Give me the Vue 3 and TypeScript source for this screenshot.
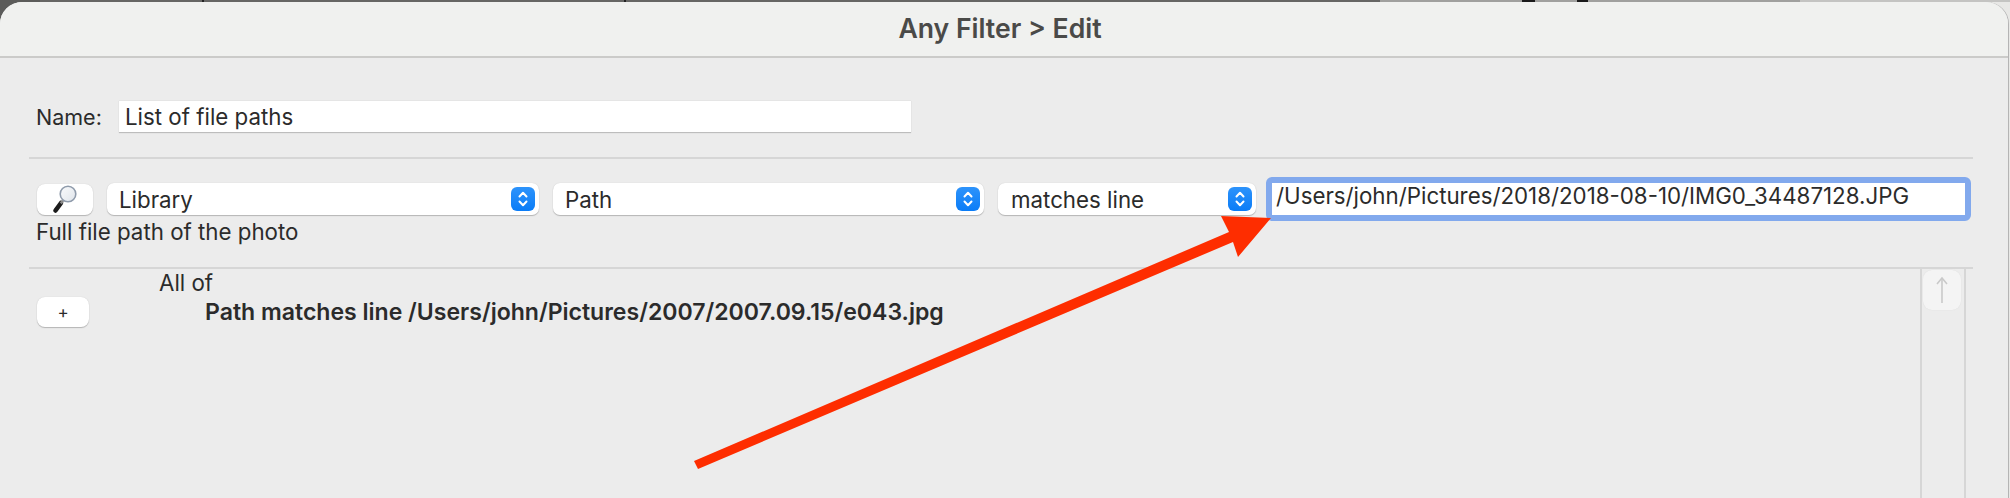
<script setup lang="ts">
interface Popup {
  label: string;
  cls: string;
}

const popups: Popup[] = [
  { label: 'Library', cls: 'w-library' },
  { label: 'Path', cls: 'w-path' },
  { label: 'matches line', cls: 'w-match' },
];
</script>

<template>
  <div class="screen">
    <div class="window">
      <header class="titlebar">Any Filter &gt; Edit</header>

      <section class="name-row">
        <label class="name-label">Name:</label>
        <div class="name-field">List of file paths</div>
      </section>

      <hr class="rule rule-top" />

      <section class="criteria">
        <div class="criteria-row">
          <button class="tool-btn search-btn">
            <svg width="30" height="30" viewBox="0 0 30 30">
              <defs>
                <linearGradient id="glass" x1="0" y1="0" x2="1" y2="1">
                  <stop offset="0" stop-color="#fafbfc" />
                  <stop offset="1" stop-color="#dfe4ea" />
                </linearGradient>
              </defs>
              <path d="M11 19 L5.5 26.5" stroke="#1c1c1c" stroke-width="4.6" stroke-linecap="round" />
              <path d="M13 16.5 L10.8 19.4" stroke="#8a8a8a" stroke-width="2.6" />
              <circle cx="18" cy="10" r="7.8" fill="url(#glass)" stroke="#8f9bab" stroke-width="1.6" />
            </svg>
          </button>
          <div v-for="p in popups" :key="p.label" class="popup" :class="p.cls">
            <span class="popup-label">{{ p.label }}</span>
            <span class="stepper">
              <svg width="12" height="18" viewBox="0 0 12 18" fill="none" stroke="#fff" stroke-width="2" stroke-linecap="round" stroke-linejoin="round">
                <path d="M2.5 6.5 L6 2.8 L9.5 6.5" />
                <path d="M2.5 11.5 L6 15.2 L9.5 11.5" />
              </svg>
            </span>
          </div>
          <div class="value-field">/Users/john/Pictures/2018/2018-08-10/IMG0_34487128.JPG</div>
        </div>
        <p class="hint">Full file path of the photo</p>
      </section>

      <hr class="rule rule-bottom" />

      <section class="results">
        <div class="add-col">
          <button class="tool-btn add-btn">+</button>
        </div>
        <div class="tree">
          <div class="tree-head">All of</div>
          <div class="tree-item">Path matches line /Users/john/Pictures/2007/2007.09.15/e043.jpg</div>
        </div>
        <div class="scroll-col">
          <button class="up-btn">
            <svg width="14" height="28" viewBox="0 0 14 28" fill="none" stroke="#c9c9c9" stroke-width="1.6">
              <path d="M7 27 V2" />
              <path d="M2 8 L7 2 L12 8" />
            </svg>
          </button>
        </div>
      </section>
    </div>

    <svg class="annotation" width="2010" height="498" viewBox="0 0 2010 498">
      <path d="M694 461 L1229 232 L1221 216 L1271 218 L1238 257 L1233 242 L698 469 Z" fill="#fe2d00" />
    </svg>
  </div>
</template>

<style>
html,
body {
  margin: 0;
  background: #e4e4e4;
}
</style>

<style scoped>
.screen {
  position: relative;
  width: 2010px;
  height: 498px;
  overflow: hidden;
  background:
    linear-gradient(#5c5c5a, #5c5c5a) 0 0 / 40px 24px no-repeat,
    linear-gradient(
        to right,
        #666664 0 202px,
        #222 202px 204px,
        #666664 204px 624px,
        #222 624px 626px,
        #666664 626px 1380px,
        #a0a09e 1380px 1522px,
        #1a1a1a 1522px 1535px,
        #a0a09e 1535px 1577px,
        #1a1a1a 1577px 1588px,
        #a0a09e 1588px 1800px,
        #c4c4c2 1800px
      )
      0 0 / 100% 2px no-repeat,
    #e8e8e6;
  font-family: Inter, 'Liberation Sans', sans-serif;
  color: #2b2b2b;
}

.window {
  width: 2008px;
  height: 496px;
  margin-top: 2px;
  border-radius: 22px 22px 0 0;
  overflow: hidden;
  background: #ececec;
  box-shadow: 1px 0 0 #b4b4b4;
}

.titlebar {
  height: 54px;
  padding-right: 8px;
  background: #f0f1ef;
  border-bottom: 2px solid #cbcbc9;
  text-align: center;
  line-height: 52px;
  font-size: 26.6px;
  font-weight: 600;
  color: #4a4a48;
}

.name-row {
  display: flex;
  align-items: center;
  margin-top: 43px;
  padding-left: 36px;
  height: 32px;
}

.name-label {
  width: 83px;
  font-size: 21.5px;
}

.name-field {
  width: 792px;
  height: 32px;
  line-height: 30px;
  padding: 1px 0 0 6px;
  box-sizing: border-box;
  background: #fff;
  border-bottom: 1px solid #bdbdbd;
  box-shadow: 0 0 1px #c4c4c4;
  font-size: 22.3px;
}

.rule {
  border: 0;
  height: 2px;
  background: #d6d6d6;
  margin: 0 35px 0 29px;
}

.rule-top {
  margin-top: 24px;
}

.criteria {
  padding: 18px 0 0 37px;
  height: 108px;
  box-sizing: border-box;
}

.criteria-row {
  display: flex;
  align-items: center;
  gap: 14px;
  height: 44px;
}

.tool-btn {
  display: flex;
  align-items: center;
  justify-content: center;
  padding: 0;
  border: 0;
  border-radius: 8px;
  background: #fff;
  box-shadow: 0 1px 1px #b5b5b5, 0 0 1px #c8c8c8;
  font-family: inherit;
  color: #2b2b2b;
}

.search-btn {
  width: 56px;
  height: 31px;
}

.popup {
  display: flex;
  align-items: center;
  justify-content: space-between;
  height: 32px;
  padding: 0 4px 0 12px;
  box-sizing: border-box;
  background: #fff;
  border-radius: 7px;
  box-shadow: 0 1px 1px #b5b5b5, 0 0 1px #c8c8c8;
  font-size: 22.3px;
}

.w-library {
  width: 432px;
}

.w-path {
  width: 431px;
}

.w-match {
  width: 258px;
  padding-left: 13px;
  margin-right: -4px;
}

.stepper {
  display: flex;
  align-items: center;
  justify-content: center;
  width: 24px;
  height: 24px;
  border-radius: 6px;
  background: linear-gradient(#2d93fb, #0a7cf7);
}

.value-field {
  width: 705px;
  height: 44px;
  line-height: 26px;
  padding-left: 4px;
  box-sizing: border-box;
  background: #fff;
  border: 6px solid #82a9ed;
  border-radius: 6px;
  font-size: 22.3px;
  white-space: nowrap;
}

.hint {
  margin: -1px 0 0 -1px;
  font-size: 22.3px;
  line-height: 24px;
}

.results {
  display: flex;
  height: 229px;
}

.add-col {
  width: 123px;
  padding: 28px 0 0 37px;
  box-sizing: border-box;
}

.add-btn {
  width: 52px;
  height: 30px;
  font-size: 17px;
}

.tree {
  flex: 1;
  padding-top: 2px;
  font-size: 22.3px;
}

.tree-head {
  margin-left: 36px;
  line-height: 24px;
}

.tree-item {
  margin-left: 82px;
  margin-top: 5px;
  line-height: 24px;
  font-size: 23.05px;
  font-weight: 600;
  white-space: nowrap;
}

.scroll-col {
  width: 46px;
  margin-top: -2px;
  margin-right: 42px;
  box-sizing: border-box;
  border-left: 2px solid #d6d6d6;
  border-right: 2px solid #d6d6d6;
  padding: 3px 0 0 1px;
}

.up-btn {
  display: flex;
  align-items: center;
  justify-content: center;
  width: 38px;
  height: 40px;
  padding: 0;
  border: 0;
  border-radius: 9px;
  background: #f4f4f4;
  box-shadow: 0 0 1px #d8d8d8;
}

.annotation {
  position: absolute;
  top: 0;
  left: 0;
  pointer-events: none;
}
</style>
